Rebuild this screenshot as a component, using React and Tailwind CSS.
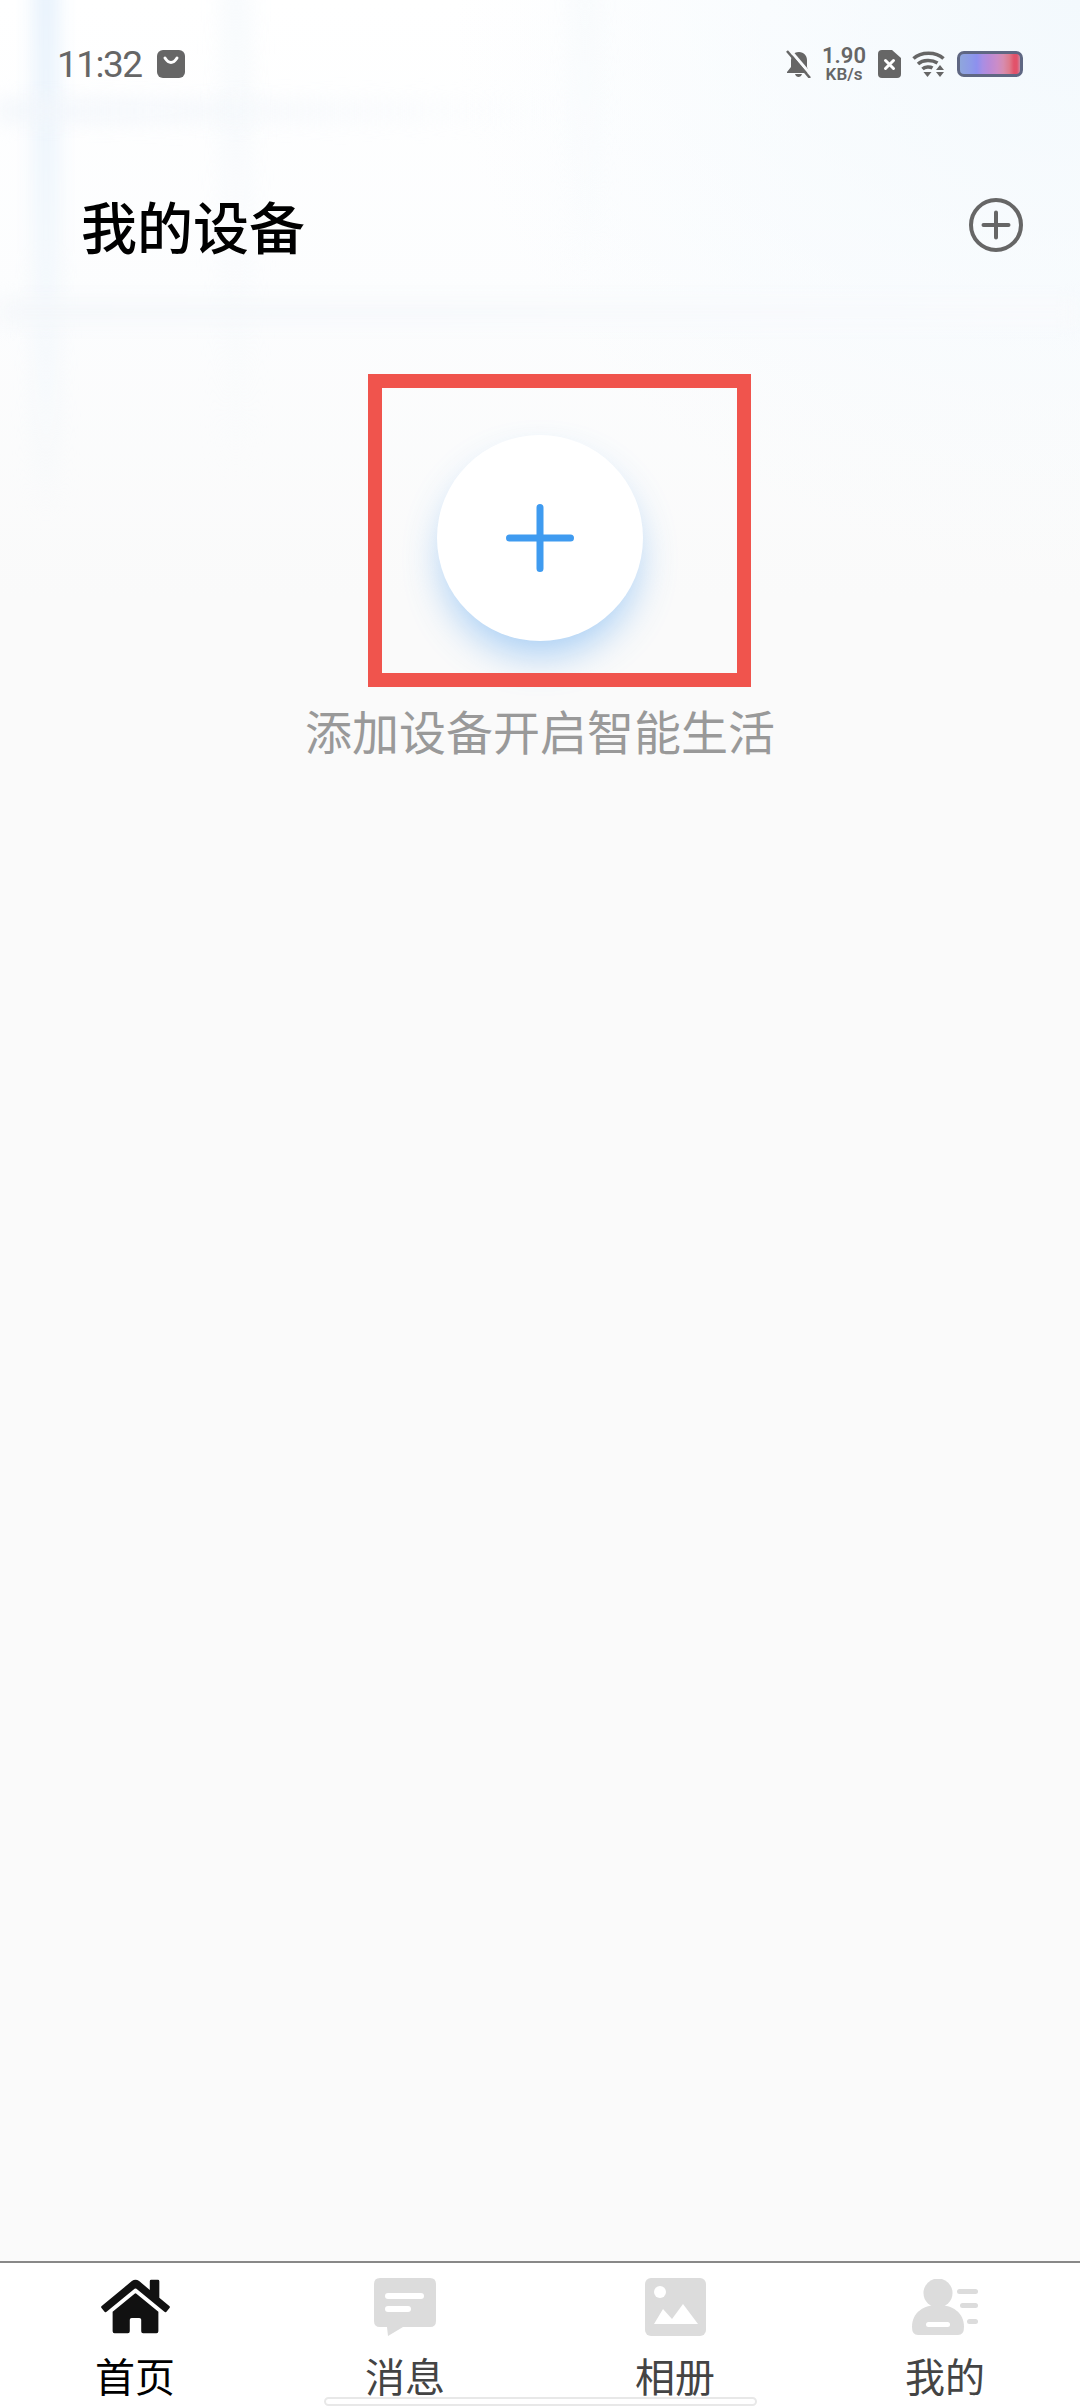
import { FaHome } from "react-icons/fa";

function BagIcon() {
  return (
    <svg viewBox="0 0 28 28" className="w-[28px] h-[28px]">
      <rect width="28" height="28" rx="6" fill="#666666" />
      <path d="M8 8 Q14 17 20 8" fill="none" stroke="#ffffff" strokeWidth="3" strokeLinecap="round" />
    </svg>
  );
}

function BellOffIcon() {
  return (
    <svg viewBox="0 0 25 28" className="w-[25px] h-[28px]">
      <path d="M13 2 C7 2 5 7 5 11 L5 17 L1 22 L1 23 L23 23 L23 22 L21 17 L21 10 C21 6 18 2 13 2 Z M9 24 C10 28 15 28 16 24 Z" fill="#666666" />
      <path d="M3 -1 L26 26" stroke="#f9fbfd" strokeWidth="3" />
      <path d="M1 1 L24 28" stroke="#666666" strokeWidth="2.5" />
    </svg>
  );
}

function SimIcon() {
  return (
    <svg viewBox="0 0 23 28" className="w-[23px] h-[28px]">
      <path d="M4 0 L14 0 L23 8 L23 24 Q23 28 19 28 L4 28 Q0 28 0 24 L0 4 Q0 0 4 0 Z" fill="#666666" />
      <path d="M7.5 10.5 L15.5 18.5 M15.5 10.5 L7.5 18.5" stroke="#ffffff" strokeWidth="3" strokeLinecap="round" />
    </svg>
  );
}

function WifiIcon() {
  return (
    <svg viewBox="0 0 33 26" className="w-[33px] h-[26px]">
      <path d="M1.5 7.5 C9 0.5 24 0.5 31.5 7.5" fill="none" stroke="#666666" strokeWidth="3.5" />
      <path d="M6 13 C11 8.5 20 8.5 25.5 12" fill="none" stroke="#666666" strokeWidth="3.5" />
      <path d="M10.5 18 C13 15.5 18 15.5 20.5 17" fill="none" stroke="#666666" strokeWidth="3.5" />
      <path d="M11.5 21 L19.5 21 L15.5 26 Z" fill="#666666" />
      <path d="M28 14 L32 19 L24 19 Z M24 21 L32 21 L28 26 Z" fill="#666666" />
    </svg>
  );
}

function AddCircleIcon() {
  return (
    <svg viewBox="0 0 54 54" className="w-[54px] h-[54px]">
      <circle cx="27" cy="27" r="25" fill="none" stroke="#666666" strokeWidth="4" />
      <path d="M14.5 27 L39.5 27 M27 14.5 L27 39.5" stroke="#666666" strokeWidth="4" strokeLinecap="round" />
    </svg>
  );
}

function MessageIcon() {
  return (
    <svg viewBox="0 0 62 58" className="w-[62px] h-[58px]">
      <path
        d="M6 0 L56 0 Q62 0 62 6 L62 43 Q62 49 56 49 L29 49 L14 58 L13 49 L6 49 Q0 49 0 43 L0 6 Q0 0 6 0 Z"
        fill="#dcdcdc"
      />
      <rect x="11" y="15" width="39" height="6" rx="3" fill="#ffffff" />
      <rect x="11" y="28" width="26" height="6" rx="3" fill="#ffffff" />
    </svg>
  );
}

function PhotoIcon() {
  return (
    <svg viewBox="0 0 61 58" className="w-[61px] h-[58px]">
      <rect width="61" height="58" rx="6" fill="#dcdcdc" />
      <circle cx="15" cy="14" r="6" fill="#ffffff" />
      <path d="M9 46 L18 31 L27 41 L38 26 L53 46 Z" fill="#ffffff" />
    </svg>
  );
}

function ProfileIcon() {
  return (
    <svg viewBox="0 0 67 56" className="w-[67px] h-[56px]">
      <circle cx="26" cy="14" r="14.5" fill="#dcdcdc" />
      <path d="M0 48 C0 33 12 26 26 26 C40 26 52 33 52 48 Q52 56 46 56 L6 56 Q0 56 0 48 Z" fill="#dcdcdc" />
      <rect x="14" y="43" width="24" height="5" rx="2.5" fill="#ffffff" />
      <rect x="45" y="10" width="21" height="5" rx="2.5" fill="#dcdcdc" />
      <rect x="48" y="24" width="18" height="5" rx="2.5" fill="#dcdcdc" />
      <rect x="55" y="40" width="11" height="5" rx="2.5" fill="#dcdcdc" />
    </svg>
  );
}

const tabs = [
  { label: "首页", icon: <FaHome className="w-[69px] h-[61px] text-[#111111]" />, active: true },
  { label: "消息", icon: <MessageIcon /> },
  { label: "相册", icon: <PhotoIcon /> },
  { label: "我的", icon: <ProfileIcon /> },
];

export default function App() {
  return (
    <div className="relative w-[1080px] h-[2408px] overflow-hidden flex flex-col bg-[#fafafa] font-['Noto_Sans_CJK_SC',sans-serif]">
      {/* blurred window photo behind the header */}
      <div className="absolute inset-x-0 top-0 h-[600px] overflow-hidden bg-gradient-to-b from-white via-[#fcfdfe] to-[#fafafa]">
        <div className="absolute right-0 top-0 w-[620px] h-[560px] bg-[radial-gradient(ellipse_at_top_right,#f3f9fd,transparent_72%)]" />
        <div className="absolute left-[34px] top-[-20px] w-[24px] h-[540px] bg-gradient-to-b from-[#e4f0fc] via-[#f1f7fc] to-transparent blur-[10px]" />
        <div className="absolute left-[224px] top-[-20px] w-[24px] h-[500px] bg-gradient-to-b from-[#f5f9fc] to-transparent blur-[12px]" />
        <div className="absolute left-[575px] top-[-20px] w-[20px] h-[300px] bg-gradient-to-b from-[#f6fafc] to-transparent blur-[12px]" />
        <div className="absolute left-0 top-[100px] w-[560px] h-[22px] bg-gradient-to-r from-[#f2f6fb] to-transparent blur-[10px]" />
        <div className="absolute left-0 top-[302px] w-[1080px] h-[20px] bg-gradient-to-r from-[#f4f7fa] to-[#f9fafc] blur-[10px]" />
      </div>

      <div className="relative h-[128px] shrink-0 flex items-center justify-between pl-[57px] pr-[57px]">
        <div className="flex items-center gap-[16px]">
          <span className="w-[84px] text-[37px] leading-none tracking-[-1.5px] font-['Roboto',sans-serif] text-[#666666]">11:32</span>
          <BagIcon />
        </div>
        <div className="flex items-center">
          <BellOffIcon />
          <div className="ml-[12px] w-[42px] flex flex-col items-center text-[#666666] font-semibold font-['Roboto',sans-serif]">
            <span className="text-[22px] leading-[20px]">1.90</span>
            <span className="text-[17px] leading-[17px]">KB/s</span>
          </div>
          <div className="ml-[13px]"><SimIcon /></div>
          <div className="ml-[11px]"><WifiIcon /></div>
          <div className="ml-[12px] w-[66px] h-[26px] rounded-[7px] border-[3px] border-[#5f6783] bg-[linear-gradient(90deg,#8fa6dc_0%,#8d9ae8_18%,#8d90ee_28%,#a98ee4_38%,#b88ad8_48%,#cb8cc8_62%,#d68cb0_72%,#dd7c8e_82%,#e2526a_90%,#e2526a_95%,#c98aa4_100%)]" />
        </div>
      </div>

      <header className="relative h-[193px] shrink-0 flex items-center justify-between pl-[81px] pr-[57px]">
        <h1 className="text-[56px] leading-none font-medium text-black">我的设备</h1>
        <AddCircleIcon />
      </header>

      <main className="relative flex-1 flex flex-col items-center pt-[114px]">
        <button className="relative w-[206px] h-[206px] rounded-full bg-white flex items-center justify-center shadow-[0_20px_38px_-6px_rgba(66,153,240,0.45)]">
          <svg viewBox="0 0 68 68" className="w-[68px] h-[68px]">
            <path d="M3.5 34 L64.5 34 M34 3.5 L34 64.5" stroke="#3f9bf0" strokeWidth="7" strokeLinecap="round" />
          </svg>
          {/* annotation frame drawn over the screenshot */}
          <span className="absolute left-[-69px] top-[-61px] w-[383px] h-[313px] border-[14px] border-[#f0544d]" />
        </button>
        <p className="mt-[57px] text-[47px] leading-[64px] text-[#999999]">添加设备开启智能生活</p>
      </main>

      <nav className="relative h-[147px] shrink-0 bg-white border-t-2 border-[#888888] grid grid-cols-4">
        {tabs.map((tab) => (
          <div key={tab.label} className="flex flex-col items-center">
            <div className="h-[61px] mt-[13px] flex items-center justify-center blur-[0.5px]">{tab.icon}</div>
            <span className={`mt-[14px] text-[40px] leading-[48px] ${tab.active ? "text-black" : "text-[#444444]"}`}>
              {tab.label}
            </span>
          </div>
        ))}
        <div className="absolute left-[324px] bottom-[2px] w-[433px] h-[9px] rounded-full bg-white border-2 border-[#e8e8e8]" />
      </nav>
    </div>
  );
}
